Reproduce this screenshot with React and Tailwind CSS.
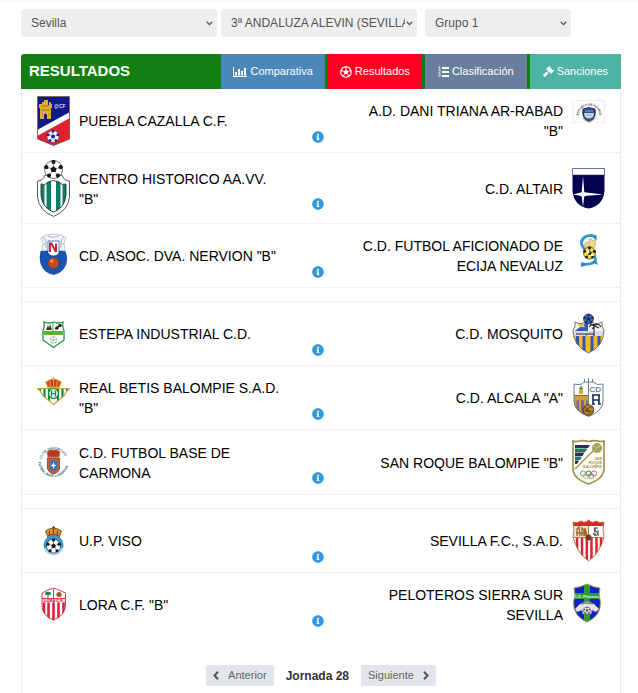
import React from "react";
import { FaInfoCircle, FaRegFutbol, FaGavel } from "react-icons/fa";

function Ball({ cx, cy, r, fill = "#fff", ink = "#16181f" }) {
  const spots = [0, 72, 144, 216, 288].map((deg) => {
    const a = ((deg - 90) * Math.PI) / 180;
    return [cx + Math.cos(a) * r * 0.84, cy + Math.sin(a) * r * 0.84];
  });
  const core = [0, 72, 144, 216, 288]
    .map((deg) => {
      const a = ((deg - 90) * Math.PI) / 180;
      return `${cx + Math.cos(a) * r * 0.36},${cy + Math.sin(a) * r * 0.36}`;
    })
    .join(" ");
  return (
    <g>
      <circle cx={cx} cy={cy} r={r} fill={fill} stroke={ink} strokeWidth="0.6" />
      {spots.map(([x, y], i) => (
        <g key={i}>
          <line x1={cx} y1={cy} x2={x} y2={y} stroke={ink} strokeWidth="0.4" />
          <circle cx={x} cy={y} r={r * 0.23} fill={ink} />
        </g>
      ))}
      <polygon points={core} fill={ink} />
    </g>
  );
}

function Crest({ h = 50, children }) {
  return (
    <svg width="33" height={h} viewBox={`0 0 33 ${h}`} className="shrink-0" aria-hidden="true">
      {children}
    </svg>
  );
}

function Puebla() {
  return (
    <Crest>
      <clipPath id="puebla"><path d="M0.5 0.5H32.5V43L16.5 49.5L0.5 43Z" /></clipPath>
      <g clipPath="url(#puebla)">
        <rect width="33" height="50" fill="#10188a" />
        <path d="M0 36L33 18V50H0Z" fill="#e0222c" />
        <path d="M0 34L33 16V22L0 40Z" fill="#fff" />
      </g>
      <path d="M3 23V12H2V8H5V6H7V9H7V4H11V9H12V6H14V8H15V12H14V23H10V19Q8.500 16 7 19V23Z" fill="#dcae2a" />
      <path d="M4 14H13M5 10H12M5 18H6M12 18H13" stroke="#8d6a13" strokeWidth="0.8" />
      <text x="17" y="12" fontSize="5" fontWeight="bold" fill="#cdd3f0" fontFamily="Liberation Sans, sans-serif">@CF</text>
      <Ball cx={16} cy={40.5} r={6} ink="#1a2688" />
      <path d="M0.5 0.5H32.5V43L16.5 49.5L0.5 43Z" fill="none" stroke="#77604e" strokeWidth="0.8" />
    </Crest>
  );
}

function Centro() {
  return (
    <Crest h={57}>
      <clipPath id="centro"><path d="M4 24Q8 26 11 22Q16 19 22 22Q25 26 29 24V35Q28 48 16.500 52Q5 48 4 35Z" /></clipPath>
      <path d="M0.500 21Q6 21 8 15H25Q27 21 32.500 21V37Q31 51 16.500 56.400Q2 51 0.500 37Z" fill="#fff" stroke="#444" strokeWidth="0.9" />
      <g clipPath="url(#centro)">
        <rect width="33" height="57" fill="#fff" />
        <path d="M3 15H7.500V57H3ZM9.500 15H14V57H9.500ZM19 15H23.500V57H19ZM25.500 15H30V57H25.500Z" fill="#078064" />
      </g>
      <path d="M4 24Q8 26 11 22Q16 19 22 22Q25 26 29 24V35Q28 48 16.500 52Q5 48 4 35Z" fill="none" stroke="#333" strokeWidth="0.9" />
      <Ball cx={16.500} cy={9.500} r={9} />
    </Crest>
  );
}

function Nervion() {
  return (
    <Crest>
      <path d="M4 20Q2 27 4 33Q7 42 16.500 43.500Q26 42 29 33Q31 26 28 20Z" fill="#1854b4" stroke="#183b7c" strokeWidth="0.6" />
      <path d="M5 20L6 12L4 7L9 4L16.500 3L24 4L29 7L27 12L28 20L22 19H11Z" fill="#f4f7fa" stroke="#aab9c6" strokeWidth="0.8" />
      <path d="M6 6Q10 9 9 17M27 6Q23 9 24 17M11 5Q16 8 22 5M6 14L9 12M27 14L24 12" stroke="#8fa5b6" strokeWidth="0.8" fill="none" />
      <path d="M11 10H22V22Q20 25 16.500 25Q13 25 11 22Z" fill="#fff" stroke="#22488c" strokeWidth="0.7" />
      <path d="M13 21V12.500H14.500L19 21V12.500" stroke="#c91d3c" strokeWidth="1.900" fill="none" />
      <circle cx="16.500" cy="32" r="5.500" fill="#bd4f20" stroke="#6e2a12" strokeWidth="0.6" />
      <circle cx="14.800" cy="30" r="1.600" fill="#ee9a68" />
    </Crest>
  );
}

function Estepa() {
  return (
    <Crest>
      <path d="M7 13Q12 15 16.500 13Q21 15 26 13Q25 18 27 22V31L16.500 38.500L6 31V22Q8 18 7 13Z" fill="#fff" stroke="#1d9343" strokeWidth="1.300" />
      <path d="M7 22H26V26H7Z" fill="#57b42c" />
      <path d="M9 21L11 16L12 19L13 15L15 21Z" fill="#333" />
      <path d="M18 20L24 16" stroke="#222" strokeWidth="1.200" />
      <circle cx="20" cy="19" r="1.700" fill="#222" />
      <circle cx="23" cy="16.500" r="1.700" fill="#222" />
      <path d="M16 14V22" stroke="#1d9343" strokeWidth="0.8" />
      <Ball cx={16.500} cy={31} r={3.500} ink="#a9adb2" />
    </Crest>
  );
}

function Betis() {
  return (
    <Crest>
      <clipPath id="betis"><path d="M0 15H33Q29 18 27 23L16.500 32L6 23Q4 18 0 15Z" /></clipPath>
      <g clipPath="url(#betis)">
        <rect width="33" height="50" fill="#fff" />
        <path d="M3 14V36M7.500 14V36M12 14V36M21 14V36M25.500 14V36M30 14V36" stroke="#118b45" strokeWidth="2.200" />
      </g>
      <path d="M0.500 15.500H32.500Q29 18 27 23L16.500 31.500L6 23Q4 18 0.500 15.500Z" fill="none" stroke="#c8a546" strokeWidth="1.200" />
      <path d="M11 14L9 9L13 7L16.500 6L20 7L24 9L22 14Z" fill="#d4352f" stroke="#c89225" strokeWidth="1.300" />
      <path d="M16.500 4V13M13 8V13M20 8V13" stroke="#e1b53a" strokeWidth="1" />
      <circle cx="16.500" cy="20.500" r="5" fill="#e2f3e6" stroke="#118b45" strokeWidth="1.200" />
      <path d="M14.500 17.500V23.500M14.500 20.500H18.500M18.500 17.500V23.500" stroke="#118b45" strokeWidth="1.200" />
    </Crest>
  );
}

function Carmona() {
  return (
    <Crest>
      <path id="carmonaTop" d="M4.500 21A12.500 12.500 0 0 1 28.800 21" fill="none" />
      <path id="carmonaLow" d="M1.500 24A15 15 0 0 0 31.500 24" fill="none" />
      <text fontSize="3.400" fontWeight="bold" fill="#44748a" fontFamily="Liberation Sans, sans-serif">
        <textPath href="#carmonaTop">CLUB DEPORTIVO</textPath>
      </text>
      <text fontSize="3.400" fontWeight="bold" fill="#28627c" fontFamily="Liberation Sans, sans-serif">
        <textPath href="#carmonaLow">FUTBOL BASE CARMONA</textPath>
      </text>
      <path d="M11 19L10 14L13 12H20L23 14L22 19Z" fill="#b9362c" stroke="#a77d33" strokeWidth="0.8" />
      <path d="M10.500 20H22.500V31Q21 35 16.500 36Q12 35 10.500 31Z" fill="#d45b2e" stroke="#743a2d" strokeWidth="0.8" />
      <path d="M12.500 22.500H20.500V31L16.500 33.500L12.500 31Z" fill="#2d76bd" />
      <path d="M16.500 24L17.300 26.500L19.500 27.500L17.300 28.500L16.500 31L15.700 28.500L13.500 27.500L15.700 26.500Z" fill="#fff" />
    </Crest>
  );
}

function Viso() {
  return (
    <Crest>
      <path d="M11 22L8.500 15L12 13L16.500 12L21 13L24.500 15L22 22Z" fill="#cf9325" stroke="#7d4c1c" strokeWidth="0.9" />
      <path d="M16.500 10V20M15 11.500H18M12.500 15V20M20.500 15V20" stroke="#7c3820" strokeWidth="1" />
      <path d="M11 20Q16.500 17 22 20" stroke="#c43530" strokeWidth="1.300" fill="none" />
      <circle cx="16.500" cy="29" r="10" fill="#3597d1" />
      <path d="M7 32Q9 39 16.500 39.500Q24 39 26 32Z" fill="#a5d4ed" />
      <Ball cx={16.500} cy={30} r={7} />
    </Crest>
  );
}

function Lora() {
  return (
    <Crest>
      <clipPath id="lora"><path d="M5 13L11 10L16.500 8L22 10L28.500 13V25Q28 36 16.500 40Q5 36 5 25Z" /></clipPath>
      <g clipPath="url(#lora)">
        <rect width="33" height="50" fill="#fff" />
        <path d="M7 22V42M11.500 22V42M16.500 22V42M21.500 22V42M26.500 22V42" stroke="#dc2140" strokeWidth="2.600" />
        <rect x="5" y="18.500" width="24" height="4" fill="#f8d6d9" />
      </g>
      <path d="M5 13L11 10L16.500 8L22 10L28.500 13V25Q28 36 16.500 40Q5 36 5 25ZM16.500 9V18M5 18.500H28.500" fill="none" stroke="#dc2140" strokeWidth="0.9" />
      <text x="7" y="22" fontSize="4" fontWeight="bold" fill="#b72238" fontFamily="Liberation Sans, sans-serif">LORA C.F.</text>
      <path d="M11 13V18" stroke="#785128" strokeWidth="1" />
      <ellipse cx="11" cy="13.500" rx="3" ry="1.700" fill="#277c4a" />
      <circle cx="22" cy="14.500" r="2.600" fill="#916324" />
    </Crest>
  );
}

function Dani() {
  return (
    <Crest>
      <rect x="0.500" y="4.500" width="32" height="22" fill="#fdfdfd" stroke="#f0f0f0" />
      <path id="daniArc" d="M6.500 19.500A10.500 10 0 1 1 27.500 19.500" fill="none" />
      <text fontSize="3" fontWeight="bold" fill="#252c3a" fontFamily="Liberation Sans, sans-serif">
        <textPath href="#daniArc">ESCUELA DE FÚTBOL</textPath>
      </text>
      <path d="M11 13L17 11.500L23 13Q25 22 17 26Q9 22 11 13Z" fill="#2a4f96" stroke="#262b38" strokeWidth="0.9" />
      <path d="M12 17H22L21 21Q17 24 13 21Z" fill="#cfd8e4" />
      <path d="M13 15H21M14 19H20M15 22H19" stroke="#87a1c4" strokeWidth="1" />
      <path d="M10 22Q17 29 24 22" stroke="#ab985b" strokeWidth="0.8" fill="none" />
    </Crest>
  );
}

function Altair() {
  return (
    <Crest h={57}>
      <path d="M0.500 8.500H32.500V31Q31 46 16.500 48.500Q2 46 0.500 31Z" fill="#02024e" />
      <path d="M0.500 8.500H32.500V15H0.500Z" fill="#fff" stroke="#33366e" strokeWidth="0.6" />
      <path d="M11 16L12.300 32.300L31 34.500L12.300 36L11 47L9.700 36L1 34.500L9.700 32.300Z" fill="#fff" />
      <path d="M9 32L13 37M13 32L9 37" stroke="#d5d8ed" strokeWidth="0.6" />
    </Crest>
  );
}

function Ecija() {
  return (
    <Crest>
      <path d="M24 6Q19 3 13 6Q7 10 11 16Q14 21 21 24Q26 28 21 32Q16 34 9 33" fill="none" stroke="#299bd2" strokeWidth="2.800" />
      <path d="M24 4L25 9L21 7ZM10 31L9 36L14 34M20 31L26 34L24 29" fill="#2387bf" />
      <path d="M12 16Q14 8 17 12L18 7L21 10L24 8L23 16L18 19Z" fill="#e9d492" stroke="#c9a650" strokeWidth="0.7" />
      <Ball cx={17.500} cy={22} r={6} fill="#f3dc37" />
      <circle cx="16" cy="21" r="1.600" fill="#fff" />
      <circle cx="20" cy="24" r="1.300" fill="#fff" />
    </Crest>
  );
}

function Mosquito() {
  return (
    <Crest>
      <clipPath id="mosquito"><path d="M3 13L8 15L16.500 12L25 15L30 13Q29 18 32 21Q32 37 16.500 44Q1 37 1 21Q4 18 3 13Z" /></clipPath>
      <g clipPath="url(#mosquito)">
        <rect width="33" height="50" fill="#f6f5ef" />
        <path d="M0 24L16 12V24Z" fill="#3159c8" />
        <rect y="27" width="33" height="23" fill="#f0bd20" />
        <path d="M5.500 27V50M12 27V50M20 27V50M27 27V50" stroke="#3454b8" strokeWidth="3" />
        <rect y="22" width="33" height="5" fill="#d8dce8" />
      </g>
      <path d="M6 15L11 14L13 18Q8 19 6 15" fill="#f0c333" />
      <path d="M22 27V16M17 18Q20 14 23 16Q27 14 29 18M18 15L27 19M20 20L25 14" stroke="#22242b" strokeWidth="1.100" fill="none" />
      <text x="4" y="26" fontSize="4" fontWeight="bold" fill="#23242d" fontFamily="Liberation Sans, sans-serif">mosquito</text>
      <path d="M3 13L8 15L16.500 12L25 15L30 13Q29 18 32 21Q32 37 16.500 44Q1 37 1 21Q4 18 3 13Z" fill="none" stroke="#6d6758" strokeWidth="0.9" />
      <Ball cx={16.500} cy={10} r={5} fill="#3f62b8" ink="#15244d" />
    </Crest>
  );
}

function Alcala() {
  return (
    <Crest>
      <clipPath id="alcala"><path d="M2 11Q9 13 12 9H21Q25 13 31 11V28Q31 38 16.500 43.500Q2 38 2 28Z" /></clipPath>
      <g clipPath="url(#alcala)">
        <rect width="33" height="50" fill="#fff" />
        <path d="M2 23H16V43H2Z" fill="#cda039" />
        <path d="M4.500 43V28Q5.500 26 7 28V43ZM9 43V28Q10.500 26 12 28V43ZM14 43V28Q15 26 16 28V43Z" fill="#7b68a0" />
        <path d="M1 22.500H16" stroke="#8a672b" strokeWidth="1" />
      </g>
      <path d="M2 11Q9 13 12 9H21Q25 13 31 11V28Q31 38 16.500 43.500Q2 38 2 28Z" fill="none" stroke="#536f8e" strokeWidth="0.9" />
      <path d="M12.500 6V9M16.500 5V40M20.500 6V9" stroke="#536f8e" strokeWidth="0.9" />
      <path d="M9 13V21M7 15.500H11" stroke="#5d8940" strokeWidth="1.500" />
      <path d="M7 21H11V17H7Z" fill="#e4a727" />
      <text x="17.500" y="18.500" fontSize="8" fill="#304e70" fontFamily="Liberation Sans, sans-serif">CD</text>
      <path d="M21 31V22H27V31M20 22H28M21 27H27M20 31H23M26 31H29" stroke="#1a2c58" strokeWidth="1.600" fill="none" />
      <circle cx="16.500" cy="37" r="5.300" fill="#b48525" stroke="#4c3516" strokeWidth="0.9" />
      <path d="M12 34Q18 36 17 42M14 39Q16 33 21 34M12 37L21 39" stroke="#4c3516" strokeWidth="0.8" fill="none" />
    </Crest>
  );
}

function SanRoque() {
  return (
    <Crest h={51}>
      <path d="M1 4Q4 5 7 4Q11 3 16.500 4.500Q22 3 26 4Q29 5 32 4V33Q31 42 16.500 47Q2 42 1 33Z" fill="#fbfbf7" stroke="#9c8f49" strokeWidth="1.600" />
      <path d="M3 8H18L16 11H3Z" fill="#33295e" />
      <path d="M3 11.500H15.500L13 15H3Z" fill="#26785c" />
      <path d="M3 15.500H12.500L10.500 19H3Z" fill="#33295e" />
      <path d="M3 19.500H10L8 23H3Z" fill="#26785c" />
      <path d="M3 23.500H7L5 27H3Z" fill="#33295e" />
      <path d="M3 32L23 12" stroke="#9c8f49" strokeWidth="1.300" />
      <circle cx="25" cy="11" r="5" fill="#aa9d60" />
      <path d="M21 9Q25 12 29 9M22 14L28 8" stroke="#d7cea2" strokeWidth="0.7" fill="none" />
      <g fontSize="3.600" fontWeight="bold" fill="#a49754" textAnchor="end" fontFamily="Liberation Sans, sans-serif">
        <text x="30" y="23">SAN</text>
        <text x="30" y="27">ROQUE</text>
        <text x="30" y="31">BALOMPIE</text>
      </g>
      <g fill="none" strokeWidth="0.9">
        <circle cx="11" cy="36.500" r="2.600" stroke="#4d8cc0" />
        <circle cx="16.500" cy="36.500" r="2.600" stroke="#494949" />
        <circle cx="22" cy="36.500" r="2.600" stroke="#d74d5d" />
        <circle cx="13.800" cy="39" r="2.600" stroke="#d8ae4c" />
        <circle cx="19.300" cy="39" r="2.600" stroke="#46a06c" />
      </g>
    </Crest>
  );
}

function Sevilla() {
  return (
    <Crest>
      <clipPath id="sevilla"><path d="M1 6Q5 8 9 5Q13 8 16.500 4Q20 8 24 5Q28 8 32 6Q30 14 32 21Q28 37 16.500 45Q5 37 1 21Q3 14 1 6Z" /></clipPath>
      <g clipPath="url(#sevilla)">
        <rect width="33" height="50" fill="#fff" />
        <rect width="33" height="10" fill="#d7272f" />
        <path d="M5 22V48M10 22V48M14.800 22V48M19.500 22V48M24.500 22V48M29 22V48" stroke="#db2531" strokeWidth="2.500" />
        <path d="M3 10H16V21H2Z" fill="#efe0c4" />
        <path d="M17 10H30V21H17Z" fill="#fff" />
      </g>
      <path d="M5 20V13L7 11L8 20M10 20V12L12 14V20M13 20V12L15 20M4 17H15" stroke="#a0652f" strokeWidth="1.300" fill="none" />
      <path d="M26 12Q22 11 22 14Q27 16 25 19Q21 20 21 17M23 11V20M26 14V20" stroke="#333" strokeWidth="0.9" fill="none" />
      <path d="M1 6Q5 8 9 5Q13 8 16.500 4Q20 8 24 5Q28 8 32 6Q30 14 32 21Q28 37 16.500 45Q5 37 1 21Q3 14 1 6ZM2 21.500H31M16.500 10V21" fill="none" stroke="#a06a36" strokeWidth="0.9" />
      <circle cx="16.500" cy="21.500" r="3" fill="#753e1c" />
    </Crest>
  );
}

function Peloteros() {
  return (
    <Crest>
      <clipPath id="peloteros"><path d="M2 8Q9 7 15 4Q21 7 28 8Q26 14 28.500 22Q29 36 15 42Q1 36 1.500 22Q4 14 2 8Z" /></clipPath>
      <g clipPath="url(#peloteros)">
        <rect width="33" height="50" fill="#1421cb" />
        <path d="M12 0H18V50H12ZM0 13H33V19H0Z" fill="#2d9c36" />
      </g>
      <path d="M2 8Q9 7 15 4Q21 7 28 8Q26 14 28.500 22Q29 36 15 42Q1 36 1.500 22Q4 14 2 8Z" fill="none" stroke="#9ba53e" strokeWidth="0.9" />
      <text x="15" y="17.500" textAnchor="middle" fontSize="3.600" fontWeight="bold" fill="#e9f5e9" fontFamily="Liberation Sans, sans-serif">C.D. Peloteros</text>
      <path d="M8 24Q15 20 22 24L27 29L24 32L20 30L19 34H11L10 30L5 32L3 29Z" fill="#e3e6e5" stroke="#8f9790" strokeWidth="0.6" />
      <path d="M9 24Q15 22 21 24" stroke="#4c5150" strokeWidth="0.8" fill="none" />
      <Ball cx={15} cy={30.500} r={3.500} fill="#eef0ef" ink="#4a504c" />
    </Crest>
  );
}

const MATCHDAY = [
  [
    ["PUEBLA CAZALLA C.F.", Puebla, 'A.D. DANI TRIANA AR-RABAD "B"', Dani],
    ['CENTRO HISTORICO AA.VV. "B"', Centro, "C.D. ALTAIR", Altair],
    ['CD. ASOC. DVA. NERVION "B"', Nervion, "C.D. FUTBOL AFICIONADO DE ECIJA NEVALUZ", Ecija],
  ],
  [
    ["ESTEPA INDUSTRIAL C.D.", Estepa, "C.D. MOSQUITO", Mosquito],
    ['REAL BETIS BALOMPIE S.A.D. "B"', Betis, 'C.D. ALCALA "A"', Alcala],
    ["C.D. FUTBOL BASE DE CARMONA", Carmona, 'SAN ROQUE BALOMPIE "B"', SanRoque],
  ],
  [
    ["U.P. VISO", Viso, "SEVILLA F.C., S.A.D.", Sevilla],
    ['LORA C.F. "B"', Lora, "PELOTEROS SIERRA SUR SEVILLA", Peloteros],
  ],
];

function ChartIcon() {
  return (
    <svg width="14" height="12" viewBox="0 0 14 12" fill="currentColor" aria-hidden="true">
      <path d="M0 1H1V10H14V11H0ZM2 6H4V9.500H2ZM5 3H7V9.500H5ZM8 5H10V9.500H8ZM11 2H13V9.500H11Z" />
    </svg>
  );
}

function RankingIcon() {
  return (
    <svg width="11" height="11" viewBox="0 0 11 11" fill="currentColor" aria-hidden="true">
      <path d="M4 1H11V3H4ZM4 5H11V7H4ZM4 9H11V11H4Z" />
      <path d="M0.500 0.900L1.500 0.400V3M0.300 3.200H2.600M0.500 4.700Q2.500 4 2.300 5.300L0.600 7H2.700M0.500 8.400H2.400L1.400 9.400Q2.700 9.700 2.200 10.500Q1.300 11 0.400 10.500" fill="none" stroke="currentColor" strokeWidth="0.7" />
    </svg>
  );
}

function Chevron({ d }) {
  return (
    <svg width="6" height="9" viewBox="0 0 6 9" fill="none" stroke="#555" strokeWidth="2" aria-hidden="true">
      <path d={d} />
    </svg>
  );
}

function Select({ label, options, className }) {
  return (
    <div className={className}>
      <div className="relative">
        <select
          aria-label={label}
          className="block h-7 w-full appearance-none rounded bg-[#eee] pr-3 pl-[10px] text-[12px] text-[#555]"
        >
          {options.map((o) => (
            <option key={o}>{o}</option>
          ))}
        </select>
        <svg width="7" height="5" viewBox="0 0 7 5" className="pointer-events-none absolute top-3 right-1" aria-hidden="true">
          <path d="M0.700 0.700L3.500 3.600L6.300 0.700" fill="none" stroke="#555" strokeWidth="1.300" />
        </svg>
      </div>
    </div>
  );
}

function Tab({ className, icon, children, current }) {
  return (
    <a
      href="#"
      aria-current={current ? "page" : undefined}
      className={`flex items-center gap-[3px] text-[11px] text-white ${className}`}
    >
      {icon}
      {children}
    </a>
  );
}

function Match({ match: [home, HomeCrest, away, AwayCrest], last }) {
  return (
    <li
      className={`flex items-center gap-[9px] px-[15px] pt-[7px] text-[14px] leading-5 text-black ${
        last ? "pb-[7px]" : "border-b border-[#f0f0f0] pb-[6px]"
      }`}
    >
      <HomeCrest />
      <div className="grid flex-1 grid-cols-[1fr_72px_1fr] items-center">
        <span>{home}</span>
        <button type="button" aria-label={`${home} - ${away}`} className="justify-self-center pt-[31px] pr-[6px] text-[#3498db]">
          <FaInfoCircle size={12} />
        </button>
        <span className="text-right">{away}</span>
      </div>
      <AwayCrest />
    </li>
  );
}

export default function App() {
  return (
    <div className="min-h-screen bg-white font-['Liberation_Sans',Arial,sans-serif]">
      <div className="h-[3px] bg-linear-to-b from-[#f7f7f7] to-white" />
      <main className="pt-[6px] pr-[17px] pl-[21px]">
        <form className="flex">
          <Select label="Provincia" options={["Sevilla"]} className="w-1/3 pr-1" />
          <Select label="Competición" options={["3ª ANDALUZA ALEVIN (SEVILLA)"]} className="w-1/3 pr-1" />
          <Select label="Grupo" options={["Grupo 1"]} className="w-1/4 pl-1" />
        </form>

        <header className="mt-[17px] flex h-[35px] justify-between rounded-tl-[3px] bg-[#117f11]">
          <h1 className="self-center pl-2 text-[15px] font-bold text-white">RESULTADOS</h1>
          <nav className="flex gap-[3px]">
            <Tab className="bg-[#4b88b9] px-3" icon={<ChartIcon />}>Comparativa</Tab>
            <Tab className="bg-[#ff0022] px-3" icon={<FaRegFutbol size={12} />} current>Resultados</Tab>
            <Tab className="bg-[#697f9d] px-[13px]" icon={<RankingIcon />}>Clasificación</Tab>
            <Tab className="bg-[#4db3a2] px-[13px]" icon={<FaGavel size={11} />}>Sanciones</Tab>
          </nav>
        </header>

        <section className="border-x border-[#ebebeb] pb-8">
          {MATCHDAY.map((group, g) => (
            <React.Fragment key={g}>
              {g > 0 && <div className="h-[14px] border-b border-[#f0f0f0]" />}
              <ul>
                {group.map((m) => (
                  <Match key={m[0]} match={m} last={m[0].startsWith("LORA")} />
                ))}
              </ul>
            </React.Fragment>
          ))}

          <div className="mt-7 flex items-center justify-center gap-3">
            <button type="button" className="flex h-[21px] items-center gap-[9px] rounded-xs bg-[#e1e5ec] px-[7px] text-[11px] text-[#666]">
              <Chevron d="M5 0.800L1.500 4.500L5 8.200" />
              Anterior
            </button>
            <span className="text-[12px] font-bold text-[#333]">Jornada 28</span>
            <button type="button" className="flex h-[21px] items-center gap-[9px] rounded-xs bg-[#e1e5ec] px-[7px] text-[11px] text-[#666]">
              Siguiente
              <Chevron d="M1 0.800L4.500 4.500L1 8.200" />
            </button>
          </div>
        </section>
      </main>
    </div>
  );
}
